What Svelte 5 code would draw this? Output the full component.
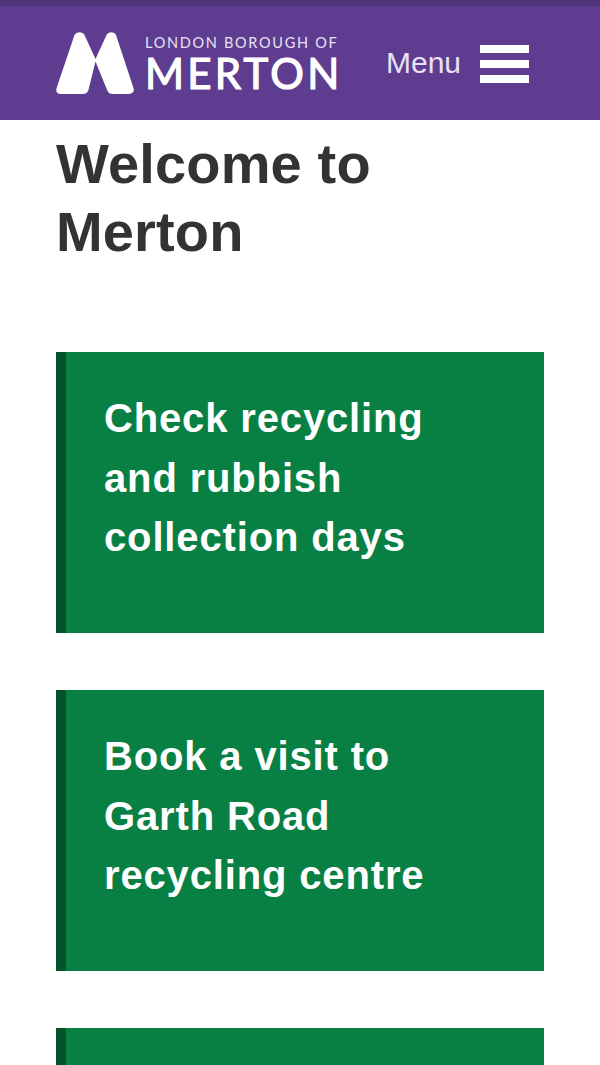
<script>
    const tasks = [
        "Check recycling and rubbish collection days",
        "Book a visit to Garth Road recycling centre",
        ""
    ];
</script>

<div class="page">
    <header class="site-header">
        <a class="logo" href="#top">
            <svg class="logo-mark" width="78" height="62" viewBox="0 0 78 62" aria-hidden="true">
                <path fill="#fff" d="M18.500 3C20.500 -.6 26.500 -.6 28.500 3L39.500 27L50.500 3C52.500 -.6 58 -.6 60 3L77.500 56C78.600 59.500 76.600 62 73 62H57C54 62 52.300 61 51.300 58.500L39.500 29.500L32.300 58.500C31.300 61 29.600 62 26.600 62H5C1.400 62 -.6 59.500 .6 56Z"/>
            </svg>
            <span class="logo-text">
                <span class="logo-small">LONDON BOROUGH OF</span>
                <span class="logo-big">MERTON</span>
            </span>
        </a>
        <button class="menu-btn">
            <span class="menu-label">Menu</span>
            <span class="bars"><i></i><i></i><i></i></span>
        </button>
    </header>

    <main class="content">
        <h1>Welcome to Merton</h1>
        {#each tasks as task}
            <a class="task-card" href="#top">{task}</a>
        {/each}
    </main>
</div>

<style>
    :global(body) {
        margin: 0;
        background: #fff;
    }

    .page {
        height: 1065px;
        overflow: hidden;
        font-family: "Liberation Sans", Arial, sans-serif;
    }

    .site-header {
        box-sizing: border-box;
        height: 120px;
        background: #5e3d91;
        border-top: 6px solid #4f3578;
        padding: 0 71px 0 56px;
        display: flex;
        align-items: center;
        justify-content: space-between;
    }

    .logo {
        display: flex;
        align-items: center;
        gap: 11px;
        color: #fff;
        text-decoration: none;
    }

    .logo-mark {
        display: block;
    }

    .logo-text {
        display: flex;
        flex-direction: column;
        padding-top: 4px;
        font-family: Lato, sans-serif;
    }

    .logo-small {
        font-size: 14.500px;
        line-height: 16px;
        letter-spacing: 1.700px;
        white-space: nowrap;
        color: #e9e2f4;
    }

    .logo-big {
        font-size: 42px;
        line-height: 44px;
        font-weight: 400;
        letter-spacing: 3.300px;
        -webkit-text-stroke: 1.200px #fff;
    }

    .menu-btn {
        display: flex;
        align-items: center;
        gap: 19px;
        background: none;
        border: 0;
        padding: 0;
        color: #e9e2f4;
        font-family: inherit;
    }

    .menu-label {
        font-size: 30px;
        line-height: 34px;
    }

    .bars {
        display: flex;
        flex-direction: column;
        gap: 7.500px;
        width: 49px;
        margin-top: 1.500px;
    }

    .bars i {
        display: block;
        height: 7.500px;
        background: #fff;
    }

    .content {
        padding: 0 56px;
    }

    h1 {
        margin: 10px 0 86px;
        font-size: 56px;
        line-height: 68px;
        font-weight: 700;
        color: #333;
        width: 400px;
        letter-spacing: 0.15px;
    }

    .task-card {
        display: block;
        box-sizing: border-box;
        min-height: 281px;
        margin-bottom: 57px;
        padding: 37px 70px 48px 38px;
        background: #088044;
        border-left: 10px solid #05532a;
        color: #fff;
        font-size: 40px;
        line-height: 59.500px;
        font-weight: 700;
        letter-spacing: 0.85px;
        text-decoration: none;
    }
</style>
